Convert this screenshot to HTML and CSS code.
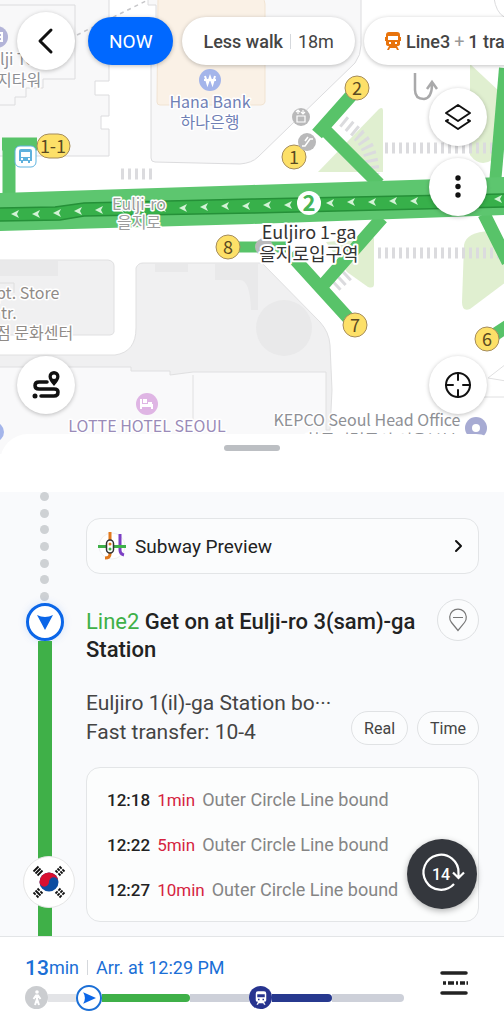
FILE: index.html
```html
<!DOCTYPE html>
<html lang="en">
<head>
    <meta charset="UTF-8">
    <meta name="viewport" content="width=device-width, initial-scale=1.0">
    <title>Transit Route</title>
    <link rel="stylesheet" href="styles.css">
</head>
<body>
    <div class="app">
        <!-- Map -->
        <section class="map">
            <svg class="map-canvas" viewBox="0 0 504 454" preserveAspectRatio="xMidYMin slice" aria-label="Map">
                <defs>
                    <path id="chevron" d="M-4 0 L4 -4 L2 0 L4 4 Z" fill="#d3f3d6"/>
                </defs>

                <!-- buildings -->
                <g stroke="#dcdcde" stroke-width="1">
                    <path fill="#f8f8f9" d="M-2 -2H109V81H95V95H109V116H101V129H109V156H-2Z"/>
                    <path fill="none" d="M-2 5H75V79H43V88H26V97H15V105H-2"/>
                    <path fill="#f8f8f9" d="M148 -2V5H156V60H151V158Q151 162 155 162L240 164Q252 163 258 157L355 63Q361 55 361 45V-2Z"/>
                    <path fill="#faf1e6" stroke="#f1e3d2" d="M158 -2H262Q265 0 265 4V102Q264 105 261 105H160Q157 105 157 102Z"/>
                    <path fill="none" d="M494 -2Q496 12 504 17"/>
                </g>
                <path d="M77 35L148 0" stroke="#c6c6c9" stroke-width="1.5" stroke-dasharray="4 4" fill="none"/>
                <g stroke="#e0e0e1" stroke-width="1">
                    <path fill="#f9f9fa" stroke="none" d="M-2 355H262L330 345L332 390L330 454H-2Z"/>
                    <path fill="#f0f0f1" d="M-2 355H115Q136 352 136 328V268Q138 263 143 263H262L320 322Q329 332 330 345L332 390L330 430H326V372H193L170 375V371H131V367H-2Z"/>
                    <path fill="#f0f0f1" d="M-2 260H108Q114 261 114 266V332Q113 335 110 335H-2Z"/>
                    <path fill="none" d="M193 375V420"/>
                    <path fill="none" d="M488 378L506 364M488 378L506 381M484 397L506 397"/>
                </g>
                <g fill="#e9e9ea">
                    <path d="M-2 261H58V276H-2ZM155 264H188V272H155ZM215 264H258V310H251Q250 280 240 280H215Z"/>
                    <circle cx="284" cy="328" r="28"/>
                </g>
                <path d="M-2 283H14V293" stroke="#dedede" fill="none"/>

                <!-- green areas -->
                <g fill="#e0efd0">
                    <path d="M318 172L379 109Q383 106 383 111V172Z"/>
                    <path d="M470 64L500 92L492 160Q480 168 470 155Z"/>
                    <path d="M326 242L374 238V284Q374 289 368 287L347 272Z"/>
                    <path d="M464 245Q466 232 490 231L506 256V282L470 309Q462 312 462 302Z"/>
                </g>

                <!-- crossings -->
                <g fill="none" stroke="#dbdbde" stroke-dasharray="3 4">
                    <path stroke-width="11" d="M121 174H153"/>
                    <path stroke-width="11" d="M385 148H494"/>
                    <path stroke-width="11" d="M378 253H504"/>
                    <path stroke-width="12" d="M343 121L360 135"/>
                    <path stroke-width="13" d="M358 135Q372 147 373 174"/>
                    <path stroke-width="13" d="M335 286L348 274"/>
                </g>

                <!-- exits -->
                <g fill="none" stroke="#58c369" stroke-width="13" stroke-linejoin="round">
                    <path d="M357 89L317 134M322 127L379 184"/>
                    <path d="M505 68L495 184" stroke-width="12"/>
                    <path d="M9 194V147M2 144H37"/>
                    <path d="M236 247H286" stroke-width="11"/>
                    <path d="M290 254L350 320M382 218L324 284M484 214L508 262"/>
                    <path d="M488 339L508 326"/>
                </g>

                <!-- main road and line 2 -->
                <path fill="#5dc66f" d="M-2 193L252 185L506 177V215L252 224L-2 231Z"/>
                <path fill="#37b04a" stroke="#259038" stroke-width="1.5" d="M-2 208L55 207L84 203L252 199L506 194V207L252 213L84 216L60 220L-2 221Z"/>
                <use href="#chevron" x="15" y="214"/>
                <use href="#chevron" x="36" y="214"/>
                <use href="#chevron" x="57" y="213"/>
                <use href="#chevron" x="78" y="211"/>
                <use href="#chevron" x="99" y="210"/>
                <use href="#chevron" x="120" y="209"/>
                <use href="#chevron" x="141" y="209"/>
                <use href="#chevron" x="162" y="208"/>
                <use href="#chevron" x="183" y="208"/>
                <use href="#chevron" x="204" y="207"/>
                <use href="#chevron" x="225" y="206"/>
                <use href="#chevron" x="246" y="206"/>
                <use href="#chevron" x="267" y="205"/>
                <use href="#chevron" x="288" y="205"/>
                <use href="#chevron" x="330" y="203"/>
                <use href="#chevron" x="351" y="202"/>
                <use href="#chevron" x="372" y="202"/>
                <use href="#chevron" x="393" y="201"/>
                <use href="#chevron" x="414" y="201"/>
                <use href="#chevron" x="498" y="199"/>
                <circle cx="309" cy="203" r="12" fill="#fff"/>
                <text class="line-no" x="309" y="211">2</text>

                <!-- exit numbers -->
                <g fill="#fde068" stroke="#a58c5c" stroke-width="1">
                    <circle cx="357" cy="88" r="12"/>
                    <circle cx="294" cy="157" r="12"/>
                    <circle cx="228" cy="247" r="12"/>
                    <circle cx="355" cy="325" r="12"/>
                    <circle cx="487" cy="339" r="12"/>
                    <rect x="37" y="134" width="33" height="24" rx="12"/>
                </g>
                <g class="exit-no">
                    <text x="357" y="95">2</text>
                    <text x="294" y="164">1</text>
                    <text x="228" y="254">8</text>
                    <text x="355" y="332">7</text>
                    <text x="487" y="346">6</text>
                    <text x="53" y="153">1-1</text>
                </g>

                <!-- bus stop -->
                <rect x="15" y="146" width="21" height="21" rx="5" fill="#fff" stroke="#5fb4e0"/>
                <path fill="#5fb1dd" fill-rule="evenodd" d="M21 149H30Q32 149 32 151V161H30V163H28V161H23V163H21V161H19V151Q19 149 21 149ZM21 152V157H30V152ZM21 158V160H23V158ZM28 158V160H30V158Z"/>

                <!-- elevator and escalator -->
                <circle cx="301" cy="117" r="9" fill="#b9b9ba"/>
                <path d="M297 116H305V122H297ZM298 114V110M296 112L298 110L300 112M303 110V114M301 112L303 114L305 112" fill="none" stroke="#fff" stroke-width="1.2"/>
                <circle cx="307" cy="142" r="9" fill="#b9b9ba"/>
                <path d="M302 146H305L310 139H313M305 141L308 137" fill="none" stroke="#fff" stroke-width="1.6"/>
                <circle cx="264" cy="247" r="9" fill="#b9b9ba"/>

                <!-- u-turn arrow -->
                <path d="M415 73V90Q415 99 424 99Q432 98 432 84M427 89L432 82L437 89" fill="none" stroke="#a9a9aa" stroke-width="2.5"/>

                <!-- places -->
                <circle cx="210" cy="80" r="11" fill="#a4b5ea"/>
                <path d="M205 76L207.500 84L210 77L212.500 84L215 76M204 80H216" fill="none" stroke="#fff" stroke-width="2"/>
                <circle cx="-3" cy="37" r="11" fill="#b3b4d8"/>
                <path d="M-2 33H2V41H-2M-2 37H2" fill="none" stroke="#fff" stroke-width="2"/>
                <circle cx="147" cy="404" r="11" fill="#dfb5e4"/>
                <path fill="#fff" d="M140 399H142V404H153V409H151V407H142V409H140ZM143 399H147V403H143ZM148 402H152V404H148Z"/>
                <circle cx="476" cy="428" r="11" fill="#a7abd3"/>
                <circle cx="476" cy="428" r="4" fill="#fff"/>
                <circle cx="-6" cy="432" r="10" fill="#a4b5ea"/>

                <g class="place">
                    <text class="bank" x="210" y="108">Hana Bank</text>
                    <text class="bank" x="210" y="128">하나은행</text>
                    <text class="grey start" x="0" y="65">lji Tower</text>
                    <text class="grey start" x="-3" y="86">지타워</text>
                    <text class="store start" x="-4" y="299">pt. Store</text>
                    <text class="store start" x="1" y="319">tr.</text>
                    <text class="store start" x="-4" y="339">점 문화센터</text>
                    <text class="hotel" x="147" y="432">LOTTE HOTEL SEOUL</text>
                    <text class="grey" x="367" y="426">KEPCO Seoul Head Office</text>
                    <text class="grey" x="381" y="446">한국전력공사 서울본부</text>
                    <text class="road" x="139" y="210">Eulji-ro</text>
                    <text class="road" x="139" y="228">을지로</text>
                    <text class="station" x="309" y="239">Euljiro 1-ga</text>
                    <text class="station" x="309" y="261">을지로입구역</text>
                </g>
            </svg>

            <nav class="top-bar">
                <button class="round-btn" aria-label="Back">
                    <svg width="30" height="30" viewBox="0 0 30 30"><path d="M20 4L9 15L20 26" class="ink" stroke-width="3"/></svg>
                </button>
                <div class="chips">
                    <button class="chip chip-now">NOW</button>
                    <button class="chip"><b>Less walk</b><i class="bar"></i>18m</button>
                    <button class="chip chip-line">
                        <svg width="16" height="18" viewBox="0 0 16 18"><path fill="#e8730c" fill-rule="evenodd" d="M4 0H12Q15 0 15 3V12Q15 14 12 14L14 18H12L11 16H5L4 18H2L4 14Q1 14 1 12V3Q1 0 4 0ZM3 4V8H13V4ZM4 10V12H6V10ZM10 10V12H12V10ZM0 5H1V9H0ZM15 5H16V9H15Z"/></svg>
                        <b>Line3</b><span class="plus">+</span><b>1 transfer</b>
                    </button>
                </div>
            </nav>

            <div class="map-tools">
                <button class="round-btn" aria-label="Layers">
                    <svg width="30" height="30" viewBox="0 0 30 30"><path d="M15 3L27 11L15 19L3 11ZM5 18L3 19L15 27L27 19L25 18" class="ink" stroke-width="2"/></svg>
                </button>
                <button class="round-btn" aria-label="More">
                    <svg width="30" height="30" viewBox="0 0 30 30"><g fill="#111"><circle cx="15" cy="6" r="2.700"/><circle cx="15" cy="14.500" r="2.700"/><circle cx="15" cy="23" r="2.700"/></g></svg>
                </button>
            </div>

            <div class="map-bottom">
                <button class="round-btn" aria-label="Route overview">
                    <svg width="30" height="30" viewBox="0 0 30 30"><path d="M16 12H8Q4 12 4 15.500Q4 19 8 19H23Q27 19 27 22Q27 26 23 26H10" class="ink" stroke-width="3.500"/><circle cx="4" cy="26" r="2.500" fill="#111"/><path fill="#111" fill-rule="evenodd" d="M23 1A5.500 5.500 0 0 1 28.500 6.500Q28.500 10 23 16Q17.500 10 17.500 6.500A5.500 5.500 0 0 1 23 1ZM23 4.500A2.200 2.200 0 1 0 23 9A2.200 2.200 0 1 0 23 4.500Z"/></svg>
                </button>
                <button class="round-btn" aria-label="My location">
                    <svg width="30" height="30" viewBox="0 0 30 30"><circle cx="15" cy="15" r="12" class="ink" stroke-width="2"/><path d="M15 3V10M15 20V27M3 15H10M20 15H27" class="ink" stroke-width="2"/></svg>
                </button>
            </div>
        </section>

        <div class="sheet-top"><span class="handle"></span></div>

        <!-- Route steps -->
        <main class="route">
            <div class="rail">
                <div class="rail-dots">
                    <i></i><i></i><i></i><i></i><i></i><i></i><i></i>
                </div>
                <div class="rail-node">
                    <svg width="18" height="18" viewBox="0 0 18 18"><path fill="#0b66e8" d="M1 2Q9 6 17 2L9 17Z"/></svg>
                </div>
                <div class="rail-line"></div>
                <div class="flag">
                    <svg width="38" height="38" viewBox="0 0 38 38">
                        <circle cx="19" cy="19" r="9.500" fill="#0d4da1"/>
                        <path fill="#d80f30" d="M9.500 19A9.500 9.500 0 0 1 28.500 19A4.750 4.750 0 0 0 19 19A4.750 4.750 0 0 1 9.500 19Z"/>
                        <g stroke="#111" stroke-width="1.800" fill="none">
                            <path d="M3.500 8.500L8.500 3.500M5.500 10.500L10.500 5.500M7.500 12.500L12.500 7.500"/>
                            <path stroke-dasharray="3 1.100" d="M29.500 3.500L34.500 8.500M27.500 5.500L32.500 10.500M25.500 7.500L30.500 12.500"/>
                            <path stroke-dasharray="3 1.100" d="M3.500 29.500L8.500 34.500M7.500 25.500L12.500 30.500"/><path d="M5.500 27.500L10.500 32.500"/>
                            <path stroke-dasharray="3 1.100" d="M29.500 34.500L34.500 29.500M27.500 32.500L32.500 27.500M25.500 30.500L30.500 25.500"/>
                        </g>
                    </svg>
                </div>
            </div>

            <div class="steps">
                <button class="preview">
                    <svg width="28" height="28" viewBox="0 0 28 28">
                        <circle cx="14" cy="14" r="13" fill="#fff" stroke="#f0f0f0"/>
                        <g fill="none" stroke-width="3">
                            <path stroke="#e2791d" d="M12 0V22Q12 26 7 26"/>
                            <path stroke="#7b3fc4" d="M22 2V18Q22 22 26 23"/>
                            <path stroke="#3fb049" d="M0 14.500H28"/>
                        </g>
                        <rect x="8.500" y="8" width="7" height="13" rx="3.500" fill="#fff" stroke="#333" stroke-width="1.500"/>
                        <circle cx="12" cy="12" r="1.500" fill="#e2791d"/><circle cx="12" cy="17" r="1.500" fill="#3fb049"/>
                    </svg>
                    <span>Subway Preview</span>
                    <svg width="10" height="14" viewBox="0 0 10 14"><path d="M2 2L7 7L2 12" class="ink" stroke-width="2"/></svg>
                </button>

                <div class="step-head">
                    <h1><span class="line2">Line2</span> Get on at Eulji-ro 3(sam)-ga Station</h1>
                    <button class="pin-btn" aria-label="Show on map">
                        <svg width="20" height="24" viewBox="0 0 20 24"><path d="M10 22.500L3.500 14.500A8.300 8.300 0 1 1 16.500 14.500ZM5 9.500H15" fill="none" stroke="#777" stroke-width="1.200"/></svg>
                    </button>
                </div>

                <div class="step-info">
                    <p>Euljiro 1(il)-ga Station bo···<br>Fast transfer: 10-4</p>
                    <div class="pills">
                        <button class="pill">Real</button>
                        <button class="pill">Time</button>
                    </div>
                </div>

                <ul class="times">
                    <li><b>12:18</b><em>1min</em><span>Outer Circle Line bound</span></li>
                    <li><b>12:22</b><em>5min</em><span>Outer Circle Line bound</span></li>
                    <li><b>12:27</b><em>10min</em><span>Outer Circle Line bound</span></li>
                </ul>
            </div>

            <button class="refresh" aria-label="Refresh">
                <svg width="44" height="44" viewBox="0 0 44 44">
                    <path d="M35 32A17.500 17.500 0 1 1 39.500 21V25M34 20.500L39.500 26L45 20.500" transform="translate(-1 0)" fill="none" stroke="#fff" stroke-width="2.200"/>
                    <text x="21" y="28">14</text>
                </svg>
            </button>
        </main>

        <!-- Trip summary -->
        <footer class="summary">
            <div class="trip">
                <p class="arrival"><strong>13</strong>min<i class="bar"></i>Arr. at 12:29 PM</p>
                <div class="track">
                    <span class="stop stop-walk">
                        <svg width="10" height="16" viewBox="0 0 10 16"><circle cx="5" cy="2" r="1.800" fill="#fff"/><path d="M5 5V9L7 15M5 9L3 15M1.500 9L4 5.500H6L8.500 9" fill="none" stroke="#fff" stroke-width="2"/></svg>
                    </span>
                    <span class="seg seg-light" style="flex-grow: 28"></span>
                    <span class="stop stop-now">
                        <svg width="14" height="14" viewBox="0 0 12 12"><path fill="#0b66e8" d="M1 1L12 6L1 11Q4 6 1 1Z"/></svg>
                    </span>
                    <span class="seg seg-green" style="flex-grow: 88"></span>
                    <span class="seg" style="flex-grow: 60"></span>
                    <span class="stop stop-train">
                        <svg width="12" height="14" viewBox="0 0 16 18"><path fill="#fff" fill-rule="evenodd" d="M4 0H12Q15 0 15 3V12Q15 14 12 14L14 18H12L11 16H5L4 18H2L4 14Q1 14 1 12V3Q1 0 4 0ZM3 4V8H13V4ZM4 10V12H6V10ZM10 10V12H12V10Z"/></svg>
                    </span>
                    <span class="seg seg-navy" style="flex-grow: 60"></span>
                    <span class="seg seg-end" style="flex-grow: 72"></span>
                </div>
            </div>
            <button class="list-btn" aria-label="Stops">
                <svg width="28" height="24" viewBox="0 0 28 24"><path d="M2 2H26M2 22H26" stroke="#222" stroke-width="3.500" stroke-linecap="round"/><path d="M3 12H6M8 12H14M16 12H18M20 12H25M26.500 12H28" stroke="#222" stroke-width="3.500"/></svg>
            </button>
        </footer>
    </div>
</body>
</html>
```

FILE: styles.css
```css
* {
    box-sizing: border-box;
}

body {
    margin: 0;
    font-family: Roboto, "Noto Sans CJK KR", sans-serif;
    color: #222;
    background-color: #fff;
}

button {
    font-family: inherit;
    color: inherit;
    border: none;
    cursor: pointer;
}

svg {
    flex: none;
}

b {
    font-weight: 500;
}

.app {
    display: flex;
    flex-direction: column;
    min-height: 100vh;
    overflow: hidden;
}

.ink {
    fill: none;
    stroke: #111;
    stroke-linecap: round;
    stroke-linejoin: round;
}

/* Map */
.map {
    position: relative;
    display: flex;
    flex-direction: column;
    height: 454px;
    padding: 12px 17px 40px;
    overflow: hidden;
}

.map-canvas {
    position: absolute;
    top: 0;
    left: 0;
    width: 100%;
    height: 100%;
}

.map-canvas text {
    font-family: "Noto Sans CJK KR", sans-serif;
    text-anchor: middle;
}

.place text {
    font-size: 16px;
    paint-order: stroke;
    stroke: #fff;
    stroke-width: 3px;
    stroke-linejoin: round;
}

.place .start {
    text-anchor: start;
}

.bank {
    fill: #6f80b5;
}

.grey {
    fill: #8e9095;
}

.store {
    fill: #908b87;
}

.hotel {
    fill: #9a8bb8;
}

.place .road {
    fill: #9c9c9c;
}

.place .station {
    font-size: 18px;
    fill: #333;
    stroke-width: 4px;
}

.exit-no text {
    font-size: 18px;
    fill: #5b4a22;
}

.map-canvas .line-no {
    font-size: 22px;
    font-weight: 700;
    fill: #45b556;
}

.top-bar {
    position: relative;
    display: flex;
    align-items: center;
    gap: 13px;
    margin-right: -17px;
}

.round-btn {
    display: flex;
    flex: none;
    align-items: center;
    justify-content: center;
    width: 58px;
    height: 58px;
    padding: 0;
    border-radius: 50%;
    background-color: #fff;
    box-shadow: 0 1px 4px rgba(0, 0, 0, 0.25);
}

.chips {
    display: flex;
    gap: 9px;
}

.chip {
    display: flex;
    flex: none;
    align-items: center;
    height: 48px;
    padding: 0 21px;
    border-radius: 24px;
    background-color: #fff;
    box-shadow: 0 1px 4px rgba(0, 0, 0, 0.25);
    font-size: 18px;
    color: #444;
    white-space: nowrap;
}

.chip-now {
    background-color: #0068ff;
    font-size: 19px;
    color: #fff;
}

.chip-line svg {
    margin-right: 5px;
}

.plus {
    margin: 0 4px;
    color: #999;
}

.bar {
    width: 1px;
    height: 15px;
    margin: 0 7px;
    background-color: #d5d8dc;
}

.map-tools {
    position: relative;
    display: flex;
    flex-direction: column;
    align-items: flex-end;
    gap: 12px;
    margin-top: 18px;
}

.map-bottom {
    position: relative;
    display: flex;
    justify-content: space-between;
    margin-top: auto;
}

/* Bottom sheet */
.sheet-top {
    position: relative;
    display: flex;
    justify-content: center;
    height: 58px;
    margin-top: -20px;
    padding-top: 11px;
    border-radius: 28px 28px 0 0;
    background-color: #fff;
}

.handle {
    width: 56px;
    height: 6px;
    border-radius: 3px;
    background-color: #bcbfc3;
}

.route {
    position: relative;
    display: flex;
    flex: 1;
    padding-right: 25px;
    background-color: #f9fafc;
}

.rail {
    position: relative;
    display: flex;
    flex: none;
    flex-direction: column;
    align-items: center;
    width: 86px;
    padding-right: 3px;
}

.rail-dots {
    display: flex;
    flex-direction: column;
    justify-content: space-between;
    height: 111px;
    padding-bottom: 2px;
}

.rail-dots i {
    width: 9px;
    height: 9px;
    border-radius: 50%;
    background-color: #ced1d4;
}

.rail-node {
    display: flex;
    flex: none;
    align-items: center;
    justify-content: center;
    width: 38px;
    height: 38px;
    border: 3px solid #0b66e8;
    border-radius: 50%;
    background-color: #fff;
    box-shadow: 0 0 8px rgba(11, 102, 232, 0.15);
}

.rail-line {
    flex: 1;
    width: 14px;
    background-color: #3fb048;
}

.rail > * {
    margin-left: 6px;
}

.flag {
    position: absolute;
    bottom: 28px;
    left: 17px;
    display: flex;
    align-items: center;
    justify-content: center;
    width: 52px;
    height: 52px;
    border: 1px solid #e6e6e6;
    border-radius: 50%;
    background-color: #fff;
}

.steps {
    flex: 1;
    min-width: 0;
    padding: 26px 0 13px;
}

.preview {
    display: flex;
    align-items: center;
    gap: 9px;
    width: 100%;
    height: 56px;
    padding: 0 14px 0 11px;
    border: 1px solid #e3e5e7;
    border-radius: 14px;
    background-color: #fbfcfd;
    font-size: 19px;
    text-align: left;
}

.preview span {
    flex: 1;
}

.step-head {
    display: flex;
    align-items: flex-start;
    justify-content: space-between;
    margin-top: 25px;
}

h1 {
    margin: 9px 0 0;
    font-size: 22px;
    font-weight: 500;
    line-height: 28px;
}

.line2 {
    font-weight: 400;
    color: #3fb048;
}

.pin-btn {
    display: flex;
    flex: none;
    align-items: center;
    justify-content: center;
    width: 42px;
    height: 42px;
    padding: 0;
    border: 1px solid #dfe1e3;
    border-radius: 50%;
    background-color: #fbfcfd;
}

.step-info {
    display: flex;
    align-items: flex-end;
    justify-content: space-between;
    margin-top: 25px;
}

.step-info p {
    margin: 0;
    font-size: 21px;
    line-height: 29px;
    color: #444;
    white-space: nowrap;
}

.pills {
    display: flex;
    gap: 9px;
    padding-bottom: 2px;
}

.pill {
    height: 34px;
    padding: 0 12px;
    border: 1px solid #e0e2e4;
    border-radius: 17px;
    background-color: #fbfcfd;
    font-size: 16px;
    color: #444;
}

.times {
    margin: 20px 0 0;
    padding: 9px 20px;
    border: 1px solid #e3e5e7;
    border-radius: 14px;
    background-color: #fcfdfd;
    list-style: none;
}

.times li {
    display: flex;
    align-items: center;
    gap: 7px;
    height: 45px;
    font-size: 17px;
    white-space: nowrap;
}

.times em {
    font-style: normal;
    color: #d5243f;
}

.times span {
    font-size: 18px;
    color: #858585;
}

.refresh {
    position: absolute;
    right: 27px;
    bottom: 27px;
    display: flex;
    align-items: center;
    justify-content: center;
    width: 70px;
    height: 70px;
    padding: 0;
    border-radius: 50%;
    background-color: #34373d;
    box-shadow: 0 2px 6px rgba(0, 0, 0, 0.3);
}

.refresh svg {
    overflow: visible;
}

.refresh text {
    font-size: 16px;
    font-weight: 500;
    text-anchor: middle;
    fill: #fff;
}

/* Trip summary */
.summary {
    display: flex;
    align-items: center;
    justify-content: space-between;
    height: 88px;
    padding: 4px 36px 0 25px;
    border-top: 1px solid #e3e5e7;
}

.trip {
    flex: 1;
    margin-right: 36px;
}

.arrival {
    display: flex;
    align-items: center;
    height: 26px;
    margin: 0 0 4px;
    font-size: 18px;
    color: #1b6fd6;
}

.arrival strong {
    font-size: 21px;
    font-weight: 500;
}

.arrival .bar {
    margin: 0 8px;
}

.track {
    display: flex;
    align-items: center;
    height: 26px;
}

.stop {
    position: relative;
    z-index: 1;
    display: flex;
    flex: none;
    align-items: center;
    justify-content: center;
    width: 23px;
    height: 23px;
    border-radius: 50%;
}

.stop-walk {
    background-color: #cbcdd0;
}

.stop-now {
    width: 26px;
    height: 26px;
    border: 2px solid #1b6fd6;
    background-color: #fff;
}

.stop-train {
    background-color: #27348f;
}

.seg {
    flex-basis: 0;
    height: 8px;
    background-color: #cdd0d9;
}

.seg-light {
    background-color: #e3e4e7;
}

.seg-green {
    border-radius: 0 4px 4px 0;
    background-color: #3fb048;
}

.seg-navy {
    border-radius: 0 4px 4px 0;
    background-color: #27398f;
}

.seg-end {
    border-radius: 0 4px 4px 0;
}

.list-btn {
    display: flex;
    padding: 0;
    background: none;
}
```
